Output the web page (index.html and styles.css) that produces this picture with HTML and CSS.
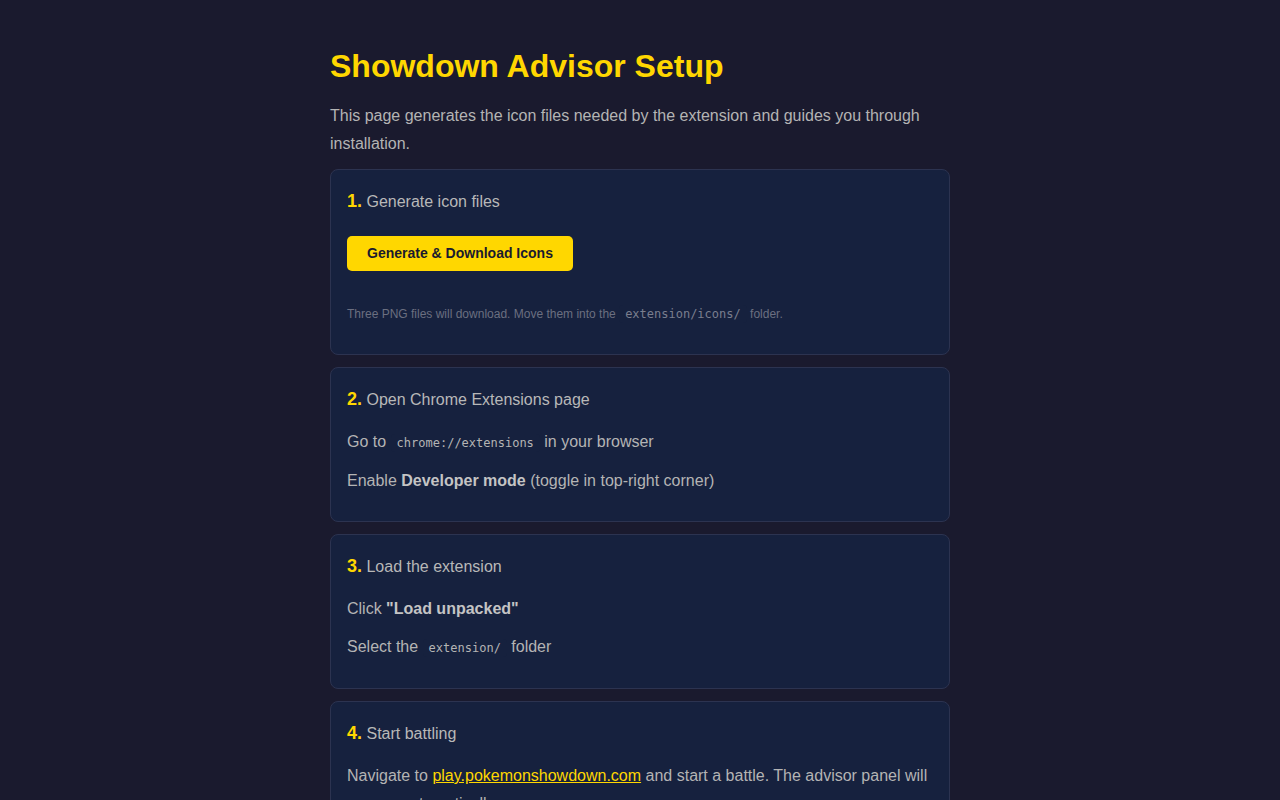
FILE: index.html
```html
<!DOCTYPE html>
<html lang="en">
<head>
    <meta charset="UTF-8">
    <meta name="viewport" content="width=device-width, initial-scale=1.0">
    <title>Showdown Advisor Setup</title>
    <link rel="stylesheet" href="styles.css">
</head>
<body>
    <div class="page">
        <h1>Showdown Advisor Setup</h1>
        <p class="intro">This page generates the icon files needed by the extension and guides you through installation.</p>

        <div class="step">
            <div class="step-title"><span class="num">1.</span> Generate icon files</div>
            <button class="generate" id="generate-button">Generate &amp; Download Icons</button>
            <p class="note">Three PNG files will download. Move them into the <code>extension/icons/</code> folder.</p>
        </div>

        <div class="step">
            <div class="step-title"><span class="num">2.</span> Open Chrome Extensions page</div>
            <p>Go to <code>chrome://extensions</code> in your browser</p>
            <p>Enable <strong>Developer mode</strong> (toggle in top-right corner)</p>
        </div>

        <div class="step">
            <div class="step-title"><span class="num">3.</span> Load the extension</div>
            <p>Click <strong>"Load unpacked"</strong></p>
            <p>Select the <code>extension/</code> folder</p>
        </div>

        <div class="step">
            <div class="step-title"><span class="num">4.</span> Start battling</div>
            <p>Navigate to <a href="https://play.pokemonshowdown.com">play.pokemonshowdown.com</a> and start a battle. The advisor panel will appear automatically.</p>
        </div>
    </div>
</body>
</html>
```

FILE: styles.css
```css
body {
    font-family: "Liberation Sans", Arial, sans-serif;
    background: #1a1a2e;
    color: #b4b4b4;
    margin: 0;
    padding: 0;
    font-size: 16px;
    line-height: 28px;
}

.page {
    max-width: 620px;
    margin: 0 auto;
    padding: 48px 20px 40px;
}

h1 {
    margin: 0;
    font-size: 32px;
    line-height: 37px;
    color: #ffd700;
}

.intro {
    margin: 17px 0 11px;
}

.step {
    background: #16213e;
    border: 1px solid #2c3350;
    border-radius: 8px;
    padding: 17px 16px 16px;
    margin-bottom: 12px;
}

.step-title {
    color: #b8b8b8;
    margin-bottom: 14px;
}

.num {
    color: #ffd700;
    font-weight: bold;
    font-size: 18px;
}

.step p {
    margin: 10px 0;
}

.step p:last-child {
    margin-bottom: 10px;
}

strong {
    color: #c4c4c4;
}

code {
    font-family: "DejaVu Sans Mono", monospace;
    font-size: 12px;
    padding: 2px 6px;
    background: #16213e;
    border-radius: 4px;
}

button.generate {
    display: block;
    margin: 20px 0 0;
    background: #ffd700;
    color: #1a1a2e;
    border: none;
    border-radius: 5px;
    padding: 10px 20px;
    font-family: "Liberation Sans", Arial, sans-serif;
    font-size: 14px;
    font-weight: bold;
    line-height: 15px;
    cursor: pointer;
}

.step p.note {
    font-size: 12px;
    line-height: 20px;
    color: #6b6f80;
    margin: 33px 0 14px;
}

.note code {
    color: #7a7e8e;
}

a {
    color: #ffd700;
}
```
